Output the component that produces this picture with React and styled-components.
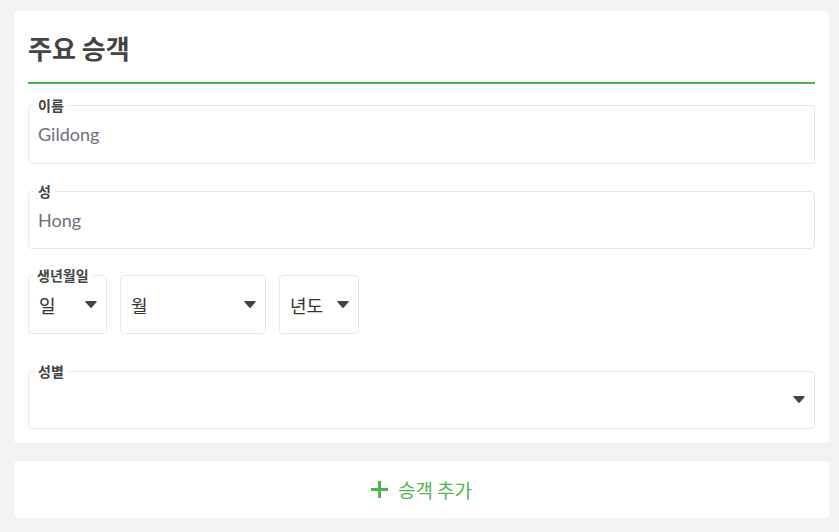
import React from "react";
import styled, { createGlobalStyle } from "styled-components";

const Global = createGlobalStyle`
  html, body { margin: 0; padding: 0; background: #f3f3f3; }
  body { font-family: "Lato", "Noto Sans CJK KR", sans-serif; }
  * { box-sizing: border-box; }
`;

const Page = styled.div`
  padding: 11px 10px 14px 14px;
  display: flex;
  flex-direction: column;
  gap: 18px;
`;

const Card = styled.section`
  background: #fff;
  border-radius: 4px;
  padding: 0 14px 14px;
  display: flex;
  flex-direction: column;
`;

const Title = styled.h2`
  margin: 0;
  padding: 22px 0 19px;
  line-height: 30px;
  font-size: 26px;
  font-weight: 700;
  color: #444;
  font-family: "Noto Sans CJK KR", sans-serif;
  border-bottom: 2px solid #4cb64e;
`;

const Field = styled.fieldset`
  margin: ${(p) => p.$mt}px 0 0;
  padding: 0 5px 8px;
  border: 1px solid #e8e8e8;
  border-radius: 4px;
  min-width: 0;
`;

const Legend = styled.legend`
  padding: 0 4px;
  line-height: 16px;
  font-size: 14px;
  font-weight: 700;
  color: #444;
  font-family: "Noto Sans CJK KR", sans-serif;
`;

const Value = styled.div`
  height: ${(p) => p.$h}px;
  padding: 0 4px;
  display: flex;
  align-items: center;
  justify-content: ${(p) => (p.$end ? "flex-end" : "flex-start")};
  font-size: 18px;
  color: #6f6f78;
`;

const BirthGroup = styled.div`
  position: relative;
  margin-top: 18px;
  padding-top: 8px;
  display: flex;
  gap: 13px;
`;

const BirthLabel = styled.span`
  position: absolute;
  top: 0;
  left: 5px;
  padding: 0 4px;
  background: #fff;
  line-height: 16px;
  font-size: 14px;
  font-weight: 700;
  color: #444;
  font-family: "Noto Sans CJK KR", sans-serif;
`;

const SelectBox = styled.div`
  width: ${(p) => p.$w}px;
  height: 59px;
  border: 1px solid #e8e8e8;
  border-radius: 4px;
  padding: 0 9px 0 10px;
  display: flex;
  align-items: center;
  justify-content: space-between;
  font-family: "Noto Sans CJK KR", sans-serif;
  font-size: 18px;
  color: #333;
`;

const AddCard = styled.button`
  height: 57px;
  border: none;
  border-radius: 4px;
  background: #fff;
  display: flex;
  align-items: center;
  justify-content: center;
  gap: 10px;
  font-family: "Noto Sans CJK KR", sans-serif;
  font-size: 19px;
  color: #4cb64e;
  cursor: pointer;
  padding: 0;
`;

const Caret = () => (
  <svg width="12" height="7" viewBox="0 0 12 7" aria-hidden="true">
    <path d="M1 0.8 H11 L6 6.2 Z" fill="#444" stroke="#444" strokeWidth="1.4" strokeLinejoin="round" />
  </svg>
);

const Plus = () => (
  <svg width="17" height="17" viewBox="0 0 17 17" aria-hidden="true">
    <rect x="0" y="7" width="17" height="3" fill="#4cb64e" />
    <rect x="7" y="0" width="3" height="17" fill="#4cb64e" />
  </svg>
);

export default function App() {
  return (
    <>
      <Global />
      <Page>
        <Card>
          <Title>주요 승객</Title>
          <Field $mt={13}>
            <Legend>이름</Legend>
            <Value $h={42}>Gildong</Value>
          </Field>
          <Field $mt={19}>
            <Legend>성</Legend>
            <Value $h={41}>Hong</Value>
          </Field>
          <BirthGroup>
            <BirthLabel>생년월일</BirthLabel>
            <SelectBox $w={79}>
              <span>일</span>
              <Caret />
            </SelectBox>
            <SelectBox $w={146}>
              <span>월</span>
              <Caret />
            </SelectBox>
            <SelectBox $w={80}>
              <span>년도</span>
              <Caret />
            </SelectBox>
          </BirthGroup>
          <Field $mt={29}>
            <Legend>성별</Legend>
            <Value $h={41} $end>
              <Caret />
            </Value>
          </Field>
        </Card>
        <AddCard>
          <Plus />
          <span>승객 추가</span>
        </AddCard>
      </Page>
    </>
  );
}
